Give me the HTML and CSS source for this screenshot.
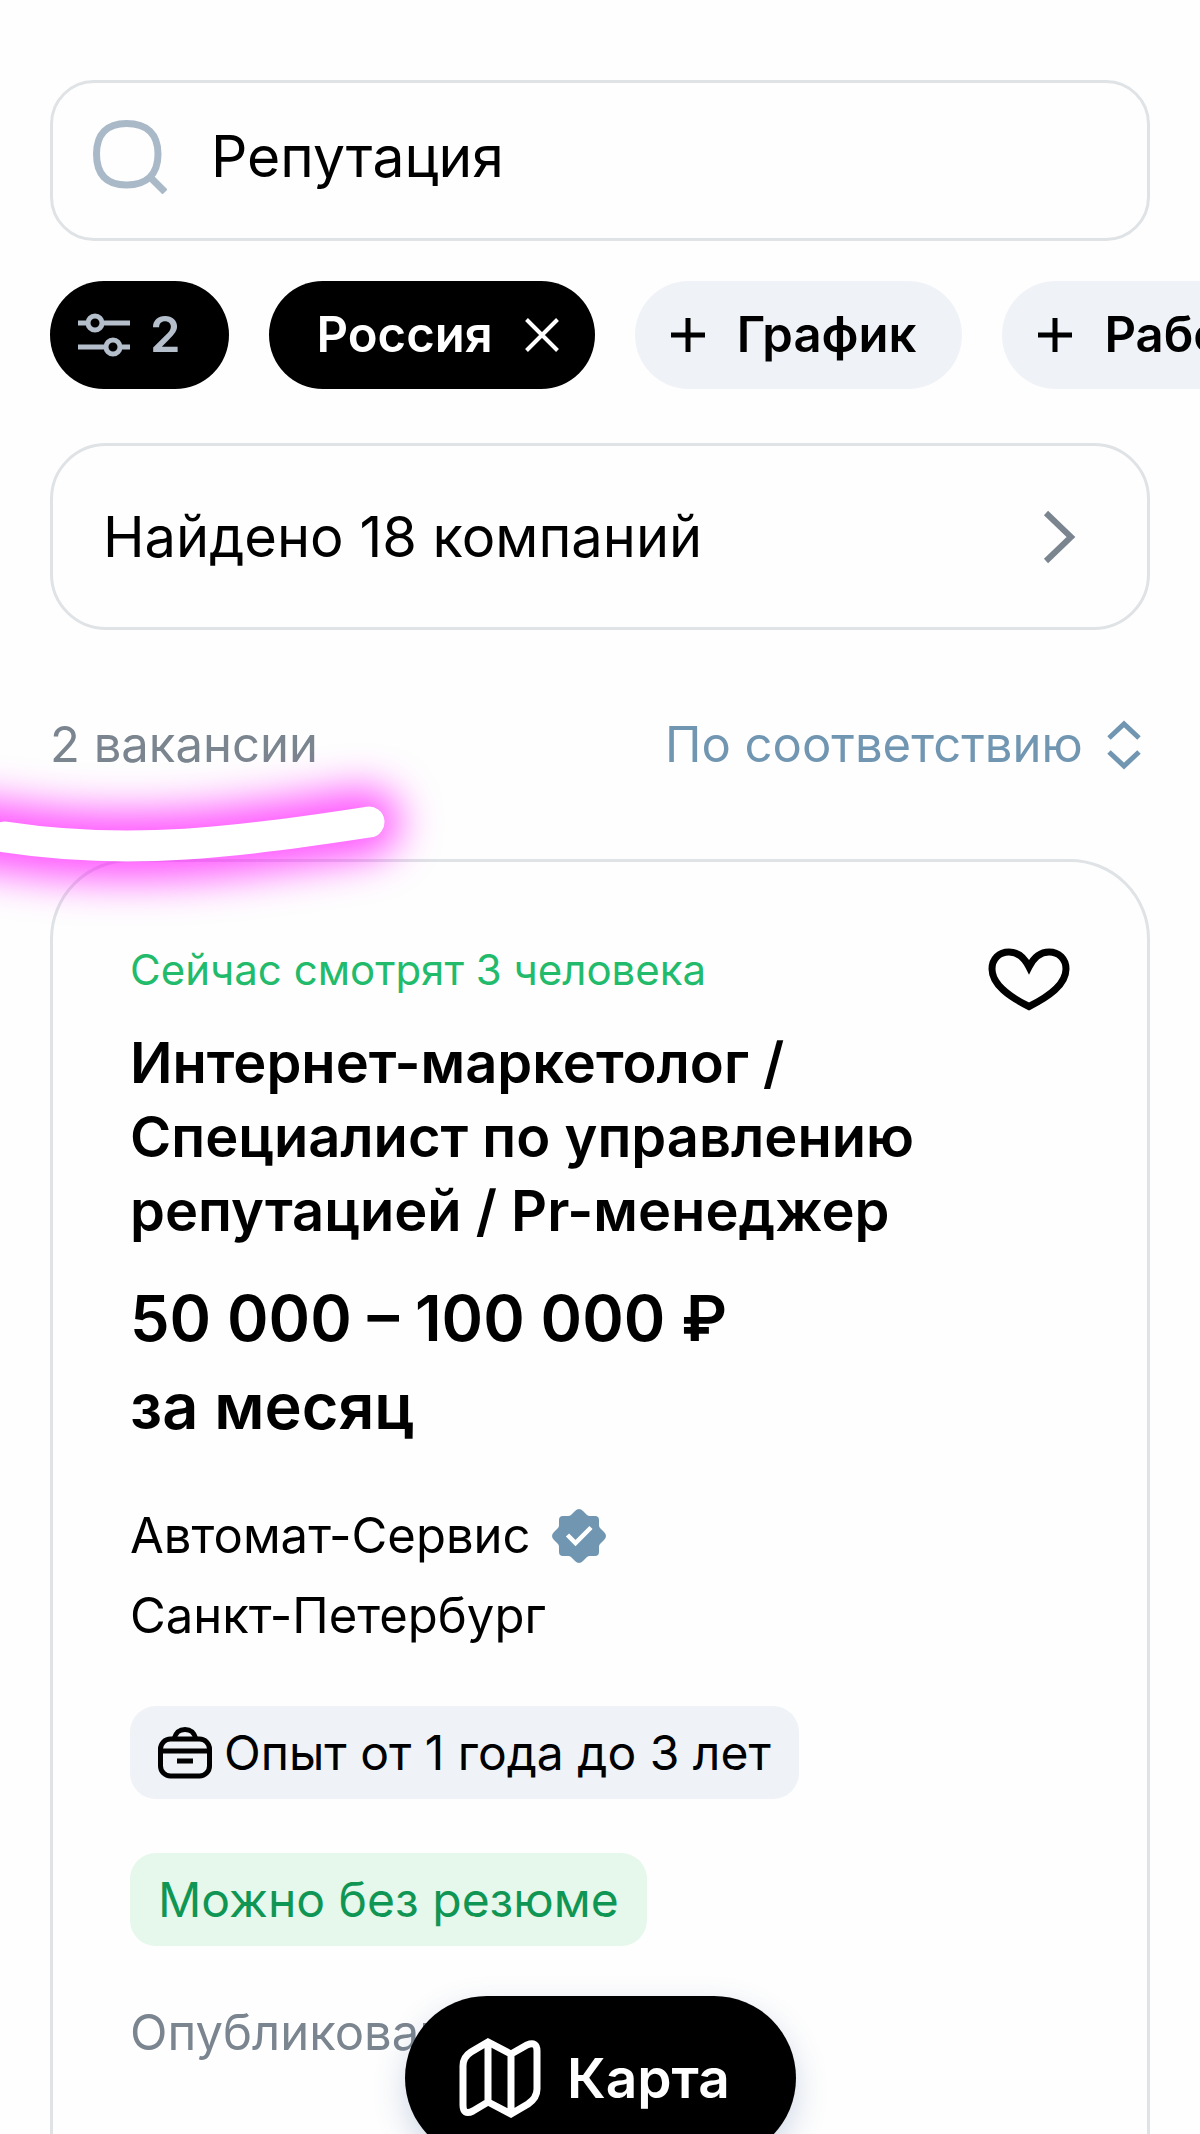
FILE: index.html
```html
<!DOCTYPE html>
<html lang="ru">
<head>
<meta charset="utf-8">
<meta name="viewport" content="width=device-width, initial-scale=1">
<title>Поиск вакансий</title>
<link rel="stylesheet" href="styles.css">
</head>
<body>
<main class="screen">
  <label class="search">
    <svg class="search-icon" width="74" height="74" viewBox="0 0 74 74" fill="none" stroke="#a9b9c8" stroke-width="7" aria-hidden="true">
      <path d="M33.500 3.500C54 3.500 65 14 65 34S54 65 33.500 65 3.500 54 3.500 34 14 3.500 33.500 3.500Z"/>
      <path d="M55 55L72 72"/>
    </svg>
    <input class="search-input" type="text" value="Репутация" aria-label="Поиск">
  </label>

  <div class="chips">
    <button class="chip chip-filters" type="button" aria-label="Фильтры: 2">
      <svg width="52" height="46" viewBox="0 0 52 46" fill="none" stroke="currentColor" stroke-width="5" aria-hidden="true">
        <path d="M0 11H8M26 11H52M0 35H26M44 35H52"/>
        <circle cx="17" cy="11" r="7"/>
        <circle cx="35" cy="35" r="7"/>
      </svg>
      <span>2</span>
    </button>
    <button class="chip chip-active" type="button">
      <span>Россия</span>
      <svg width="34" height="34" viewBox="0 0 34 34" fill="none" stroke="currentColor" stroke-width="4" aria-hidden="true"><path d="M1.500 1.500L32.500 32.500M32.500 1.500L1.500 32.500"/></svg>
    </button>
    <button class="chip" type="button">
      <svg width="34" height="34" viewBox="0 0 34 34" fill="none" stroke="currentColor" stroke-width="5" aria-hidden="true"><path d="M17 0V34M0 17H34"/></svg>
      <span>График</span>
    </button>
    <button class="chip" type="button">
      <svg width="34" height="34" viewBox="0 0 34 34" fill="none" stroke="currentColor" stroke-width="5" aria-hidden="true"><path d="M17 0V34M0 17H34"/></svg>
      <span>Работа</span>
    </button>
  </div>

  <a class="companies" href="#">
    <span>Найдено 18 компаний</span>
    <svg width="34" height="54" viewBox="0 0 34 54" fill="none" stroke="#7b858f" stroke-width="6" aria-hidden="true"><path d="M3 3L28 27L3 51"/></svg>
  </a>

  <div class="summary">
    <span class="count">2 вакансии</span>
    <label class="sort">
      <select class="sort-select" aria-label="Сортировка"><option>По соответствию</option></select>
      <svg width="34" height="50" viewBox="0 0 34 50" fill="none" stroke="currentColor" stroke-width="5" aria-hidden="true"><path d="M2 18L17 4L32 18M2 32L17 46L32 32"/></svg>
    </label>
    <svg class="marker" width="480" height="200" viewBox="0 0 480 200" fill="none" stroke-linecap="round" aria-hidden="true">
      <defs><filter id="glow" filterUnits="userSpaceOnUse" x="-140" y="-40" width="640" height="280" color-interpolation-filters="sRGB"><feGaussianBlur stdDeviation="20"/></filter></defs>
      <path d="M-60 90L5 97C130 116 240 102 366 82" stroke="#ff00ff" stroke-opacity=".68" stroke-width="68" filter="url(#glow)"/>
      <path d="M5 97C130 116 240 102 369 82" stroke="#fff" stroke-width="31"/>
    </svg>
  </div>

  <article class="card">
    <div class="card-top">
      <p class="viewers">Сейчас смотрят 3 человека</p>
      <button class="favorite" type="button" aria-label="В избранное">
        <svg width="82" height="64" viewBox="0 0 82 64" fill="none" stroke="#000" stroke-width="7" aria-hidden="true"><path d="M41 19C36 9 29 4 21 4C11 4 4 11 4 21C4 37 22 49 41 58.500C60 49 78 37 78 21C78 11 71 4 61 4C53 4 46 9 41 19Z"/></svg>
      </button>
    </div>
    <h2 class="title">Интернет-маркетолог / Специалист по управлению репутацией / Pr-менеджер</h2>
    <p class="salary">50 000 – 100 000 ₽<br>за месяц</p>
    <div class="employer">
      <span class="employer-name">Автомат-Сервис
        <svg width="56" height="56" viewBox="0 0 56 56" aria-hidden="true">
          <path fill="#7196b2" d="M24 3Q28-1 32 3L36 7Q37 8 39 8H44Q48 8 48 12V17Q48 19 49 20L53 24Q57 28 53 32L49 36Q48 37 48 39V44Q48 48 44 48H39Q37 48 36 49L32 53Q28 57 24 53L20 49Q19 48 17 48H12Q8 48 8 44V39Q8 37 7 36L3 32Q-1 28 3 24L7 20Q8 19 8 17V12Q8 8 12 8H17Q19 8 20 7Z"/>
          <path fill="none" stroke="#fff" stroke-width="4.500" d="M16.500 27L24.500 35L40 19.500"/>
        </svg>
      </span>
      <span>Санкт-Петербург</span>
    </div>
    <div class="tags">
      <span class="tag tag-experience">
        <svg width="54" height="52" viewBox="0 0 54 52" fill="none" stroke="#000" stroke-width="5" aria-hidden="true">
          <path d="M16 12C18 5 21 2.500 27 2.500S36 5 38 12"/>
          <rect x="2.500" y="12" width="49" height="37" rx="10"/>
          <path d="M2.500 24H51.500M19 34H35"/>
        </svg>
        Опыт от 1 года до 3 лет
      </span>
      <span class="tag tag-green">Можно без резюме</span>
    </div>
    <p class="published">Опубликовано</p>
  </article>

  <button class="map-button" type="button">
    <svg width="82" height="82" viewBox="0 0 82 82" fill="none" stroke="currentColor" stroke-width="7" stroke-linejoin="miter" aria-hidden="true">
      <path d="M29 5L12 15Q4 20 4 29V68Q4 79 14 74L29 65L52 77L69 67Q78 61 78 52V14Q78 4 68 8L52 17ZM29 5V65M52 17V77"/>
    </svg>
    <span>Карта</span>
  </button>
</main>
</body>
</html>
```
FILE: styles.css
```css
* {
  box-sizing: border-box;
}

body {
  margin: 0;
  background: #fefefe;
  color: #000;
  font-family: Inter, "Liberation Sans", sans-serif;
  font-size: 49px;
}

p,
h2 {
  margin: 0;
}

button,
input,
select {
  margin: 0;
  border: 0;
  font-family: inherit;
  color: inherit;
}

svg {
  display: block;
  flex: none;
}

.screen {
  position: relative;
  display: flex;
  flex-direction: column;
  height: 100vh;
  padding: 80px 50px 0;
  overflow: hidden;
}

.search {
  flex: none;
  display: flex;
  align-items: center;
  gap: 44px;
  height: 161px;
  padding: 0 40px 8px;
  border: 3px solid #dfe3e6;
  border-radius: 44px;
}

.search-input {
  flex: 1;
  min-width: 0;
  padding: 0;
  background: none;
  font-size: 57px;
  line-height: 72px;
  outline: 0;
}

.chips {
  flex: none;
  display: flex;
  gap: 40px;
  margin: 40px -50px 0 0;
  overflow: hidden;
}

.chip {
  flex: none;
  display: flex;
  align-items: center;
  gap: 32px;
  height: 108px;
  padding: 0 46px 0 36px;
  border-radius: 54px;
  background: #eff2f7;
  font-size: 49px;
  font-weight: 600;
  line-height: 64px;
}

.chip-filters {
  gap: 20px;
  padding: 0 48px 0 28px;
  background: #000;
  color: #b4bfcb;
}

.chip-active {
  padding: 0 36px 0 48px;
  background: #000;
  color: #fff;
}

.companies {
  flex: none;
  display: flex;
  align-items: center;
  justify-content: space-between;
  height: 187px;
  margin-top: 54px;
  padding: 0 70px 0 50px;
  border: 3px solid #dfe3e6;
  border-radius: 56px;
  color: #000;
  font-size: 56px;
  line-height: 72px;
  text-decoration: none;
}

.summary {
  position: relative;
  flex: none;
  display: flex;
  align-items: center;
  justify-content: space-between;
  height: 64px;
  margin-top: 83px;
  line-height: 64px;
}

.count {
  color: #7b858f;
}

.sort {
  display: flex;
  align-items: center;
  gap: 24px;
  padding-right: 9px;
  color: #7196b2;
}

.sort-select {
  appearance: none;
  padding: 0;
  background: none;
  font-size: 49px;
  line-height: 64px;
}

/* Glowing highlighter stroke over the list heading */
.marker {
  position: absolute;
  z-index: 1;
  top: 27px;
  left: -50px;
  overflow: visible;
  pointer-events: none;
}

.card {
  flex: none;
  margin-top: 82px;
  padding: 80px 77px 160px;
  border: 3px solid #dfe3e6;
  border-radius: 80px;
}

.card-top {
  display: flex;
  justify-content: space-between;
  height: 56px;
}

.viewers {
  color: #22bb6c;
  font-size: 42px;
  line-height: 56px;
}

.favorite {
  align-self: flex-start;
  margin-top: 6px;
  padding: 0;
  background: none;
}

.title {
  max-width: 840px;
  margin-top: 28px;
  font-size: 56px;
  font-weight: 600;
  line-height: 74px;
}

.salary {
  margin-top: 26px;
  font-size: 63px;
  font-weight: 600;
  line-height: 88px;
}

.employer {
  display: flex;
  flex-direction: column;
  margin-top: 46px;
  line-height: 80px;
}

.employer-name {
  display: flex;
  align-items: center;
  gap: 20px;
}

.tags {
  display: flex;
  flex-direction: column;
  align-items: flex-start;
  gap: 54px;
  margin-top: 50px;
}

.tag {
  display: flex;
  align-items: center;
  gap: 12px;
  height: 93px;
  padding: 0 28px;
  border-radius: 26px;
  font-size: 48px;
  line-height: 64px;
}

.tag-experience {
  background: #eff2f7;
}

.tag-green {
  background: #e6f7eb;
  color: #0f9655;
}

.published {
  margin-top: 55px;
  color: #7b858f;
  line-height: 64px;
}

.map-button {
  position: absolute;
  bottom: -26px;
  left: 405px;
  display: flex;
  align-items: center;
  gap: 26px;
  height: 164px;
  padding: 0 66px 0 54px;
  border-radius: 82px;
  background: #000;
  box-shadow: 0 12px 32px rgba(60, 90, 150, 0.24);
  color: #fff;
  font-size: 55px;
  font-weight: 600;
  line-height: 72px;
}
```
